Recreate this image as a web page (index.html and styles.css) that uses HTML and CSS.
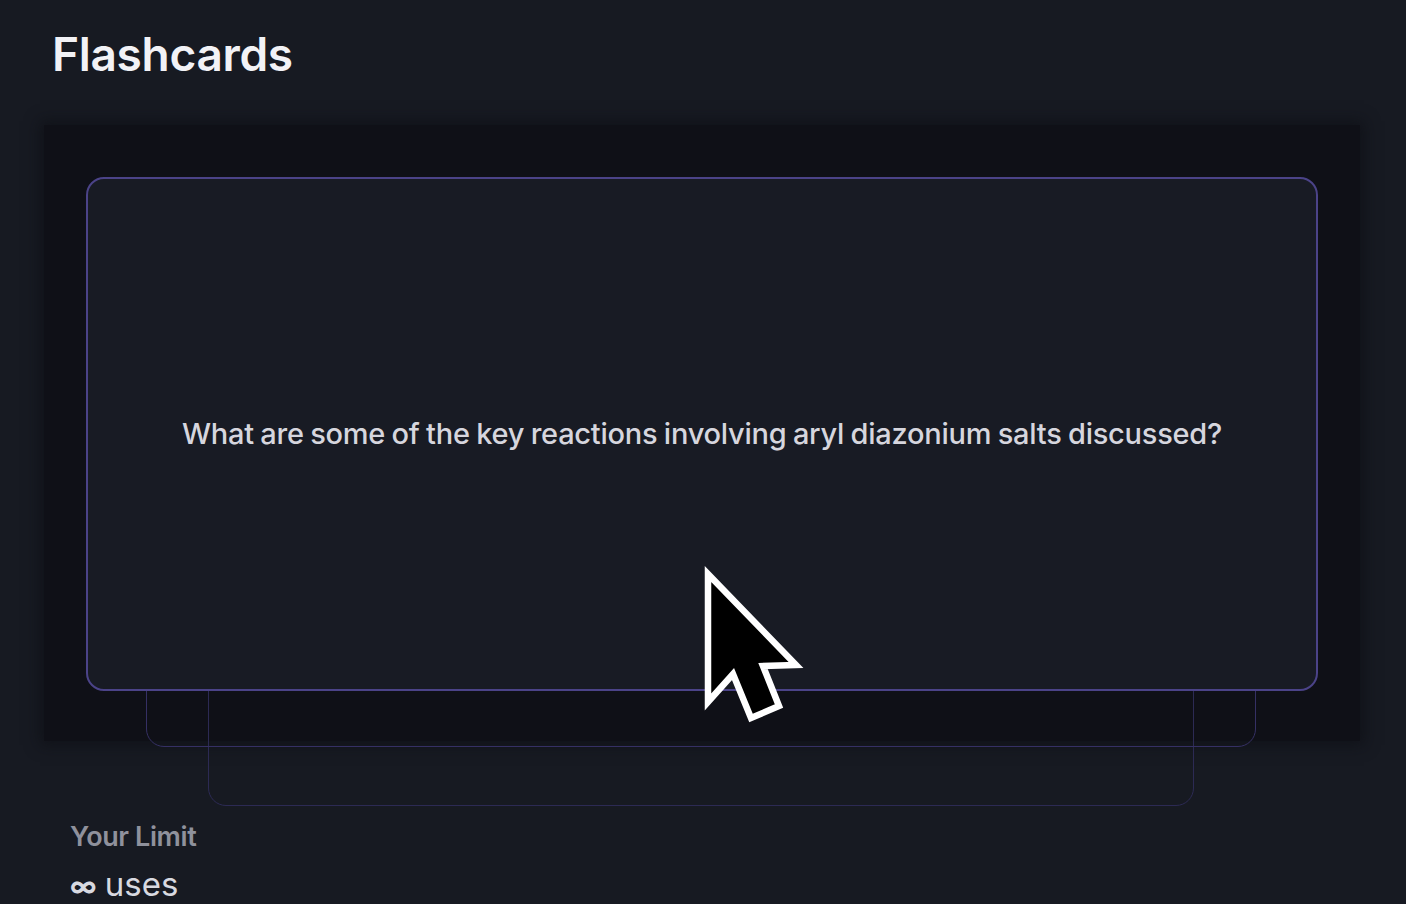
FILE: index.html
```html
<!DOCTYPE html>
<html lang="en">

<head>
    <meta charset="UTF-8">
    <meta name="viewport" content="width=device-width, initial-scale=1.0">
    <title>Flashcards</title>
    <link rel="stylesheet" href="styles.css">
</head>

<body>
    <div class="page">
        <h1 class="title">Flashcards</h1>

        <div class="stage">
            <div class="deck">
                <div class="card card-back card-back-2"></div>
                <div class="card card-back card-back-1"></div>
                <div class="card card-front">
                    <p class="question">What are some of the key reactions involving aryl diazonium salts discussed?</p>
                </div>
            </div>
        </div>

        <div class="limit">
            <div class="limit-label">Your Limit</div>
            <div class="limit-value"><span class="infinity">&infin;</span> uses</div>
        </div>
    </div>

    <!-- mouse pointer captured in the recording -->
    <svg class="pointer" width="110" height="165" viewBox="0 0 110 165">
        <path d="M6 8 L6 136 L31 108 L49 152 L77 140 L61 100 L94 99 Z" fill="#000" stroke="#fff" stroke-width="6.5" stroke-linejoin="miter"/>
    </svg>
</body>

</html>
```

FILE: styles.css
```css
body {
    margin: 0;
    padding: 0;
    background-color: #171a22;
    font-family: 'Inter', 'Lato', sans-serif;
    color: #e6e6ec;
    height: 904px;
    overflow: hidden;
}

.page {
    padding: 24px 46px 0 44px;
}

.title {
    margin: 0 0 0 8px;
    font-size: 46px;
    font-weight: 600;
    color: #f2f2f6;
    line-height: 60px;
    letter-spacing: -0.3px;
}

.stage {
    margin-top: 41px;
    background-color: #0f1017;
    box-shadow: 0 0 14px 4px rgba(12, 13, 19, 0.6);
    padding: 52px 42px 50px 42px;
}

.deck {
    position: relative;
}

.card {
    border-radius: 18px;
    box-sizing: border-box;
}

.card-front {
    position: relative;
    z-index: 3;
    height: 514px;
    background-color: #181b24;
    border: 2px solid #4b4388;
    display: flex;
    align-items: center;
    justify-content: center;
}

.card-back {
    position: absolute;
    border: 1.5px solid #2f2b58;
    background-color: transparent;
}

.card-back-1 {
    z-index: 2;
    left: 60px;
    right: 62px;
    top: 40px;
    height: 530px;
    border-color: #353064;
}

.card-back-2 {
    z-index: 1;
    left: 122px;
    right: 124px;
    top: 100px;
    height: 529px;
    border-color: #2c2a54;
}

.question {
    margin: 0 0 2px 0;
    font-size: 29px;
    font-weight: 500;
    color: #d6d6de;
    letter-spacing: -0.25px;
    word-spacing: -1px;
}

.limit {
    margin-top: 79px;
    padding-left: 26px;
}

.limit-label {
    font-size: 27px;
    font-weight: 600;
    color: #8f919c;
    line-height: 34px;
    letter-spacing: -0.4px;
}

.limit-value {
    margin-top: 12px;
    font-size: 33px;
    color: #d8d9e0;
    line-height: 36px;
}

.infinity {
    font-size: 27px;
    font-weight: 700;
    letter-spacing: -1px;
}

.pointer {
    position: absolute;
    left: 702px;
    top: 566px;
    z-index: 10;
}
```
